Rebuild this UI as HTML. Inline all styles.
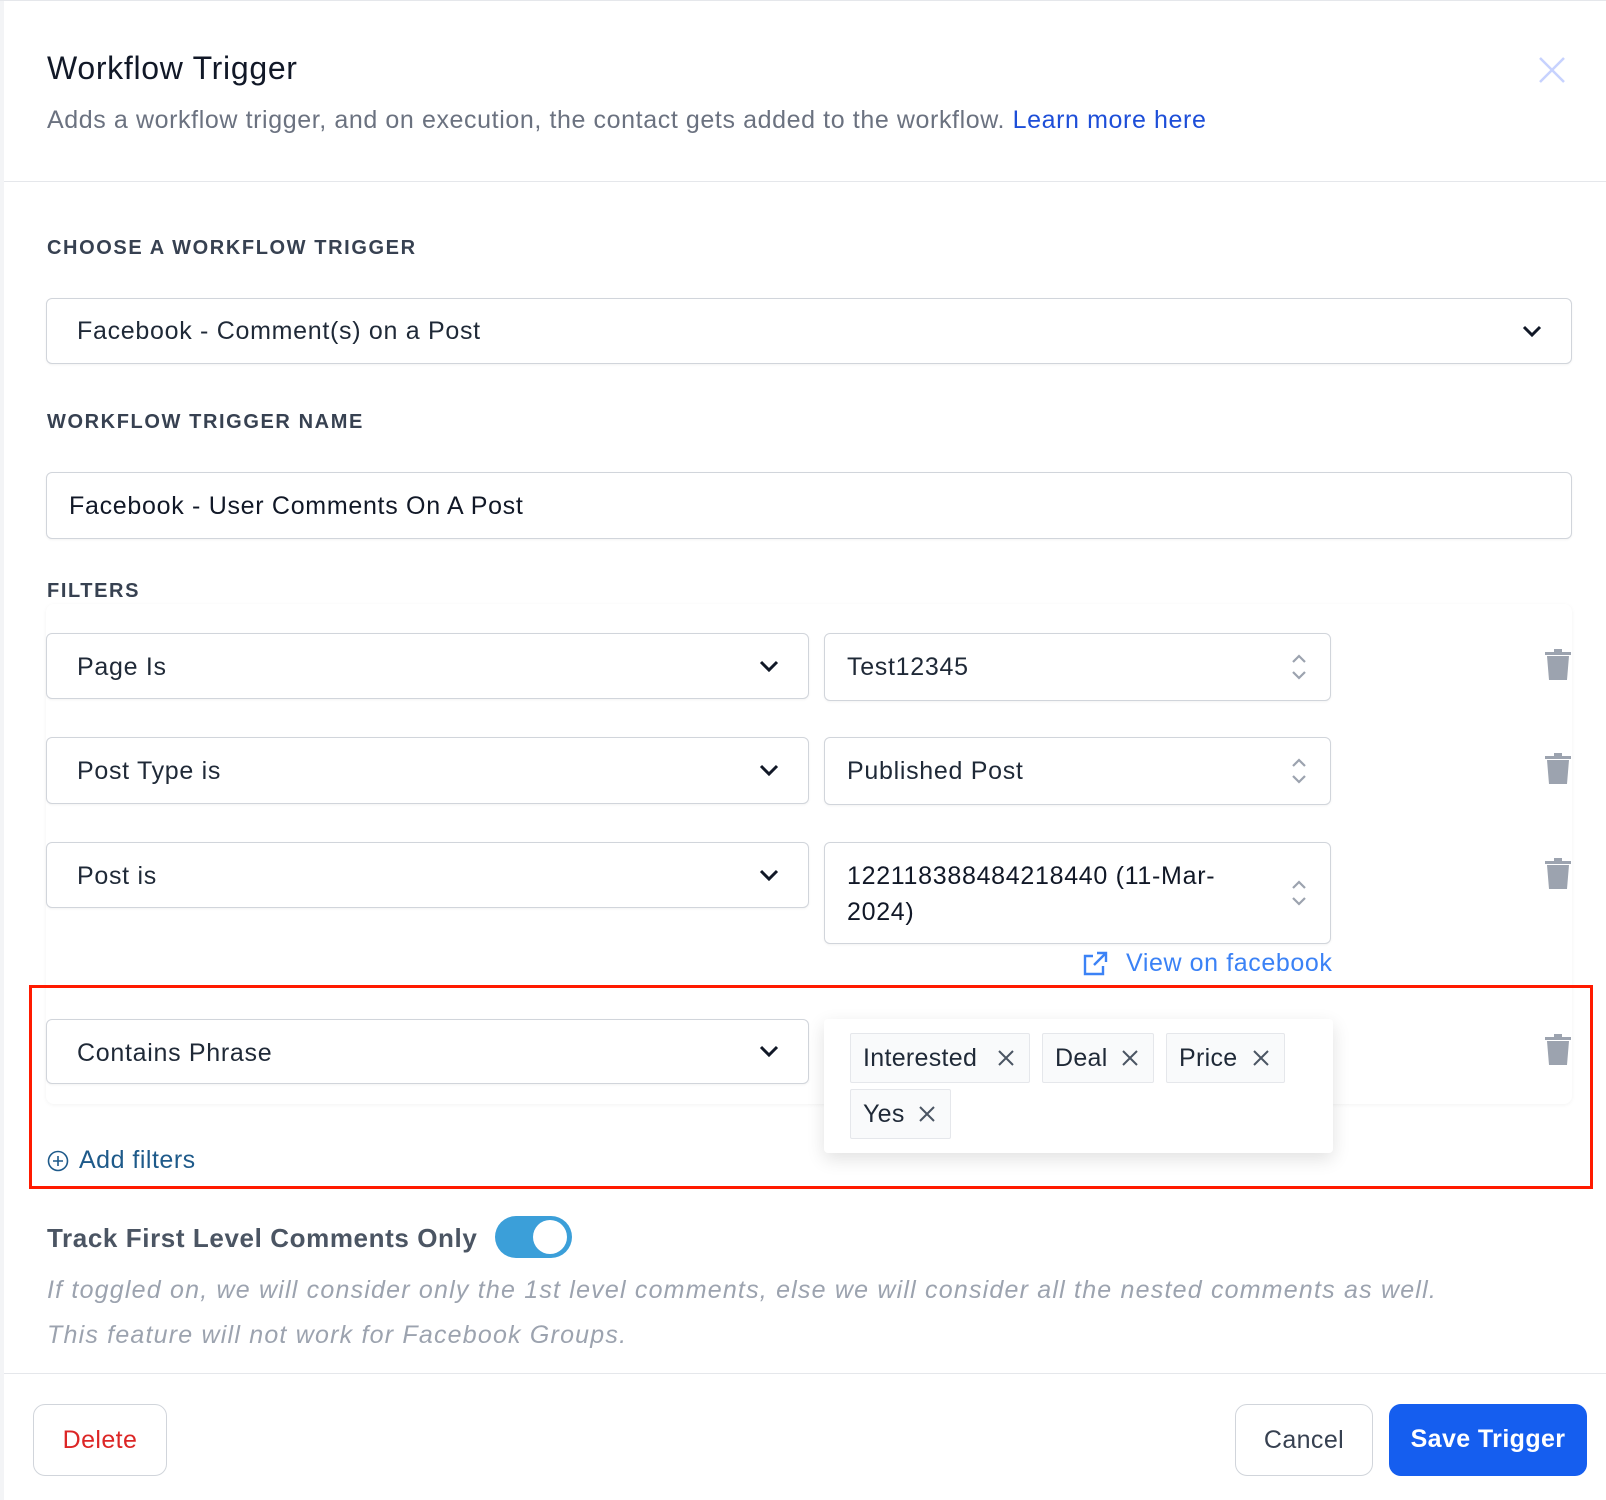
<!DOCTYPE html>
<html><head><meta charset="utf-8"><style>
*{box-sizing:border-box;margin:0;padding:0}
body{width:1606px;height:1500px;background:#fff;font-family:"Liberation Sans",sans-serif;position:relative;overflow:hidden;color:#111827}
.a{position:absolute}
.lbl{font-size:20px;font-weight:bold;letter-spacing:1.6px;color:#374151}
.box{position:absolute;border:1px solid #d1d5db;border-radius:6px;background:#fff;box-shadow:0 1px 2px rgba(0,0,0,.05)}
.txt{position:absolute;font-size:25px;letter-spacing:0.7px;color:#1f2937}
.chev{position:absolute;width:22px;height:14px}
.ud{position:absolute;width:18px;height:30px}
.trash{position:absolute;width:28px;height:34px}
.tag{position:absolute;height:50px;border:1px solid #e5e7eb;background:#f9fafb;border-radius:2px;font-size:25px;letter-spacing:0.3px;color:#1f2937;line-height:48px;padding-left:12px}
.tag svg{position:absolute;right:14px;top:15px}
.btn{position:absolute;border-radius:12px;font-size:25px;letter-spacing:0.4px;text-align:center;line-height:70px}
</style></head><body>
<div class="a" style="left:0;top:0;width:4px;height:1500px;background:#f3f4f6"></div>
<div class="a" style="left:0;top:0;width:1606px;height:1px;background:#e5e7eb"></div>
<div class="a" style="left:47px;top:50px;font-size:32px;letter-spacing:0.7px;color:#111827">Workflow Trigger</div>
<svg class="a" style="left:1538px;top:56px" width="28" height="28" viewBox="0 0 28 28"><path d="M2 2L26 26M26 2L2 26" stroke="#c7d2fe" stroke-width="2.5"/></svg>
<div class="a" style="left:47px;top:106px;font-size:25px;letter-spacing:0.6px;color:#6b7280">Adds a workflow trigger, and on execution, the contact gets added to the workflow. <span style="color:#1d4ed8">Learn more here</span></div>
<div class="a" style="left:4px;top:181px;width:1602px;height:1px;background:#e5e7eb"></div>

<div class="a lbl" style="left:47px;top:237px">CHOOSE A WORKFLOW TRIGGER</div>
<div class="box" style="left:46px;top:298px;width:1526px;height:66px"></div>
<div class="txt" style="left:77px;top:317px">Facebook - Comment(s) on a Post</div>
<svg class="chev" style="left:1521px;top:324px" viewBox="0 0 22 14"><path d="M3 3L11 11L19 3" stroke="#111827" stroke-width="3" fill="none"/></svg>

<div class="a lbl" style="left:47px;top:411px">WORKFLOW TRIGGER NAME</div>
<div class="box" style="left:46px;top:472px;width:1526px;height:67px"></div>
<div class="txt" style="left:69px;top:492px;color:#111827">Facebook - User Comments On A Post</div>

<div class="a lbl" style="left:47px;top:580px">FILTERS</div>
<div class="a" style="left:46px;top:604px;width:1526px;height:500px;border-radius:8px;box-shadow:0 1px 4px rgba(0,0,0,.05)"></div>

<div class="box" style="left:46px;top:633px;width:763px;height:66px"></div>
<div class="txt" style="left:77px;top:653px">Page Is</div>
<svg class="chev" style="left:758px;top:659px" viewBox="0 0 22 14"><path d="M3 3L11 11L19 3" stroke="#111827" stroke-width="3" fill="none"/></svg>
<div class="box" style="left:824px;top:633px;width:507px;height:68px"></div>
<div class="txt" style="left:847px;top:653px">Test12345</div>
<svg class="ud" style="left:1290px;top:652px" viewBox="0 0 18 30"><path d="M3 10L9 4L15 10M3 20L9 26L15 20" stroke="#9ca3af" stroke-width="2.2" fill="none"/></svg>
<svg class="trash" style="left:1544px;top:647px" viewBox="0 0 28 34"><path d="M10 2h8v3H10z M1 5h26v3H1z M3 9h22l-2 24H5z" fill="#9ca3af"/></svg>

<div class="box" style="left:46px;top:737px;width:763px;height:67px"></div>
<div class="txt" style="left:77px;top:757px">Post Type is</div>
<svg class="chev" style="left:758px;top:763px" viewBox="0 0 22 14"><path d="M3 3L11 11L19 3" stroke="#111827" stroke-width="3" fill="none"/></svg>
<div class="box" style="left:824px;top:737px;width:507px;height:68px"></div>
<div class="txt" style="left:847px;top:757px">Published Post</div>
<svg class="ud" style="left:1290px;top:756px" viewBox="0 0 18 30"><path d="M3 10L9 4L15 10M3 20L9 26L15 20" stroke="#9ca3af" stroke-width="2.2" fill="none"/></svg>
<svg class="trash" style="left:1544px;top:751px" viewBox="0 0 28 34"><path d="M10 2h8v3H10z M1 5h26v3H1z M3 9h22l-2 24H5z" fill="#9ca3af"/></svg>

<div class="box" style="left:46px;top:842px;width:763px;height:66px"></div>
<div class="txt" style="left:77px;top:862px">Post is</div>
<svg class="chev" style="left:758px;top:868px" viewBox="0 0 22 14"><path d="M3 3L11 11L19 3" stroke="#111827" stroke-width="3" fill="none"/></svg>
<div class="box" style="left:824px;top:842px;width:507px;height:102px"></div>
<div class="txt" style="left:847px;top:858px;line-height:36px;color:#111827">122118388484218440 (11-Mar-<br>2024)</div>
<svg class="ud" style="left:1290px;top:878px" viewBox="0 0 18 30"><path d="M3 10L9 4L15 10M3 20L9 26L15 20" stroke="#9ca3af" stroke-width="2.2" fill="none"/></svg>
<svg class="trash" style="left:1544px;top:856px" viewBox="0 0 28 34"><path d="M10 2h8v3H10z M1 5h26v3H1z M3 9h22l-2 24H5z" fill="#9ca3af"/></svg>
<svg class="a" style="left:1082px;top:951px" width="26" height="26" viewBox="0 0 26 26"><path d="M11 5H3v18h18v-8M15 2h9v9M24 2L12 14" stroke="#3b82f6" stroke-width="2.4" fill="none"/></svg>
<div class="a" style="left:1126px;top:949px;font-size:25px;letter-spacing:0.6px;color:#3b82f6">View on facebook</div>

<div class="a" style="left:29px;top:985px;width:1564px;height:204px;border:3px solid #ff1a00"></div>
<div class="box" style="left:46px;top:1019px;width:763px;height:65px"></div>
<div class="txt" style="left:77px;top:1039px">Contains Phrase</div>
<svg class="chev" style="left:758px;top:1044px" viewBox="0 0 22 14"><path d="M3 3L11 11L19 3" stroke="#111827" stroke-width="3" fill="none"/></svg>
<svg class="trash" style="left:1544px;top:1032px" viewBox="0 0 28 34"><path d="M10 2h8v3H10z M1 5h26v3H1z M3 9h22l-2 24H5z" fill="#9ca3af"/></svg>
<div class="a" style="left:824px;top:1019px;width:509px;height:134px;background:#fff;border-radius:4px;box-shadow:0 6px 18px rgba(0,0,0,.12)"></div>
<div class="tag" style="left:850px;top:1033px;width:180px">Interested<svg width="18" height="18" viewBox="0 0 18 18"><path d="M2 2L16 16M16 2L2 16" stroke="#4b5563" stroke-width="2"/></svg></div>
<div class="tag" style="left:1042px;top:1033px;width:112px">Deal<svg width="18" height="18" viewBox="0 0 18 18"><path d="M2 2L16 16M16 2L2 16" stroke="#4b5563" stroke-width="2"/></svg></div>
<div class="tag" style="left:1166px;top:1033px;width:119px">Price<svg width="18" height="18" viewBox="0 0 18 18"><path d="M2 2L16 16M16 2L2 16" stroke="#4b5563" stroke-width="2"/></svg></div>
<div class="tag" style="left:850px;top:1089px;width:101px">Yes<svg width="18" height="18" viewBox="0 0 18 18"><path d="M2 2L16 16M16 2L2 16" stroke="#4b5563" stroke-width="2"/></svg></div>
<svg class="a" style="left:47px;top:1150px" width="22" height="22" viewBox="0 0 22 22"><circle cx="11" cy="11" r="9.5" stroke="#1e5a8a" stroke-width="1.6" fill="none"/><path d="M11 6v10M6 11h10" stroke="#1e5a8a" stroke-width="1.6"/></svg>
<div class="a" style="left:79px;top:1146px;font-size:25px;letter-spacing:0.5px;color:#1e5a8a">Add filters</div>

<div class="a" style="left:47px;top:1223px;font-size:26px;font-weight:bold;letter-spacing:0.6px;color:#4b5563">Track First Level Comments Only</div>
<div class="a" style="left:495px;top:1216px;width:77px;height:42px;border-radius:21px;background:#3b9fd9"></div>
<div class="a" style="left:533px;top:1220px;width:34px;height:34px;border-radius:50%;background:#fff"></div>
<div class="a" style="left:47px;top:1268px;font-size:25px;letter-spacing:1.2px;font-style:italic;color:#9ca3af;line-height:45px">If toggled on, we will consider only the 1st level comments, else we will consider all the nested comments as well.<br>This feature will not work for Facebook Groups.</div>

<div class="a" style="left:4px;top:1373px;width:1602px;height:1px;background:#e5e7eb"></div>
<div class="btn" style="left:33px;top:1404px;width:134px;height:72px;border:1px solid #d1d5db;color:#dc2626">Delete</div>
<div class="btn" style="left:1235px;top:1404px;width:138px;height:72px;border:1px solid #d1d5db;color:#374151">Cancel</div>
<div class="btn" style="left:1389px;top:1404px;width:198px;height:72px;background:#155eef;color:#fff;font-weight:bold">Save Trigger</div>
</body></html>
